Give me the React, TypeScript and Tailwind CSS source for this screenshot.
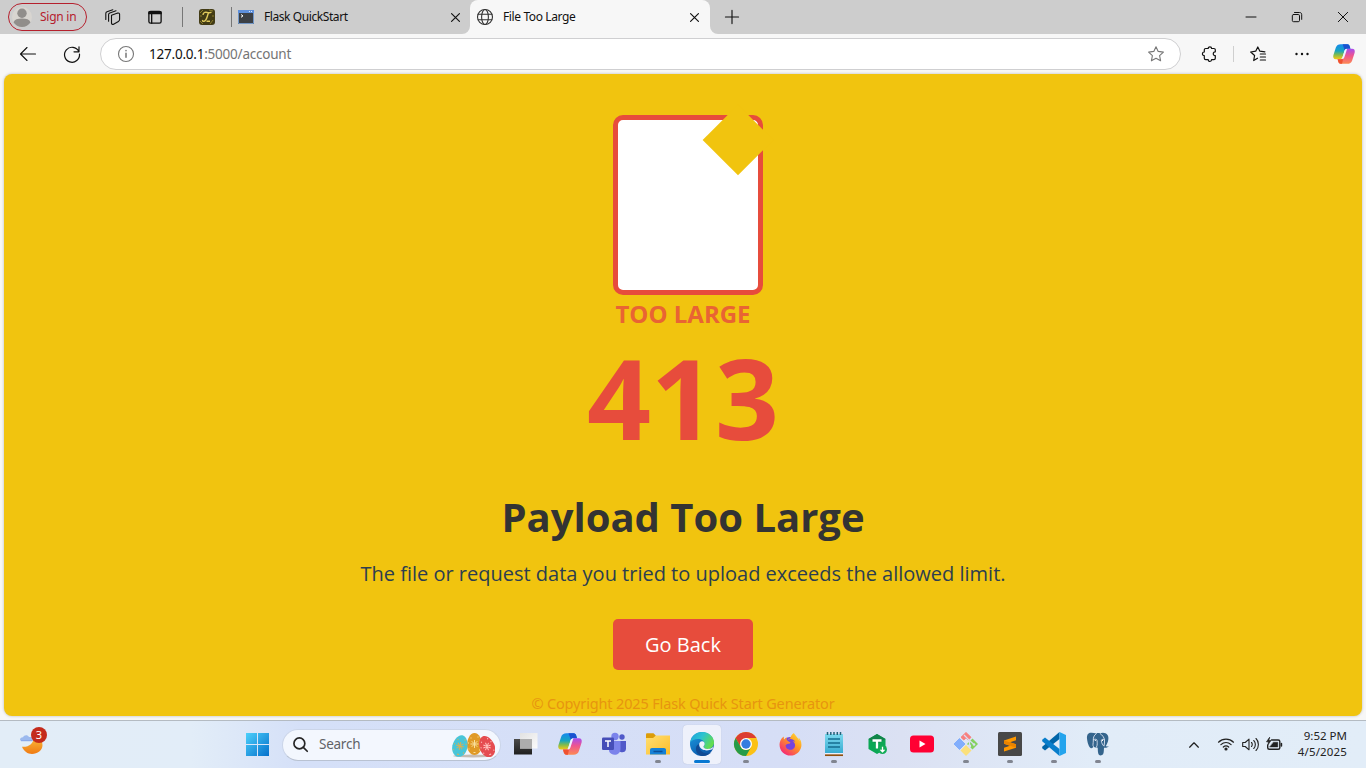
import React from 'react';
import { FaFirefoxBrowser } from 'react-icons/fa';

type IconProps = { className?: string; box?: string; children: React.ReactNode };

function Icon({ className = 'size-6', box = '0 0 24 24', children }: IconProps) {
  return (
    <svg viewBox={box} className={`block shrink-0 overflow-visible ${className}`} fill="none">
      {children}
    </svg>
  );
}

function Line({ className = 'size-4', children, color = '#111', w = 1.1 }: { className?: string; children: React.ReactNode; color?: string; w?: number }) {
  return (
    <svg viewBox="0 0 16 16" className={`block shrink-0 overflow-visible ${className}`} fill="none" stroke={color} strokeWidth={w} strokeLinecap="round" strokeLinejoin="round">
      {children}
    </svg>
  );
}

function Defs() {
  return (
    <svg className="absolute size-0">
      <defs>
        <linearGradient id="copA" x1="0" y1="0" x2="0" y2="1">
          <stop offset="0" stopColor="#1689ee" />
          <stop offset=".45" stopColor="#16a5c0" />
          <stop offset=".7" stopColor="#7dbb50" />
          <stop offset="1" stopColor="#f7c914" />
        </linearGradient>
        <linearGradient id="copB" x1="0" y1="0" x2="0" y2="1">
          <stop offset="0" stopColor="#a64df0" />
          <stop offset=".45" stopColor="#ee5590" />
          <stop offset="1" stopColor="#fd8a52" />
        </linearGradient>
        <linearGradient id="win" x1="0" y1="0" x2="1" y2="1">
          <stop offset="0" stopColor="#4cd0fb" />
          <stop offset="1" stopColor="#0570cb" />
        </linearGradient>
        <linearGradient id="moon" x1="0" y1="0" x2="0" y2="1">
          <stop offset="0" stopColor="#f9ba3a" />
          <stop offset="1" stopColor="#f07a12" />
        </linearGradient>
        <linearGradient id="edgeTop" x1="0" y1="0" x2="1" y2=".5">
          <stop offset="0" stopColor="#1da0dc" />
          <stop offset=".5" stopColor="#2cc3d0" />
          <stop offset="1" stopColor="#62dc50" />
        </linearGradient>
        <linearGradient id="edgeLow" x1="0" y1="0" x2=".6" y2="1">
          <stop offset="0" stopColor="#1b9de2" />
          <stop offset="1" stopColor="#0c56a8" />
        </linearGradient>
        <linearGradient id="fox" x1="1" y1="0" x2=".2" y2="1">
          <stop offset="0" stopColor="#ffe83d" />
          <stop offset=".45" stopColor="#ff9a22" />
          <stop offset="1" stopColor="#f5207a" />
        </linearGradient>
        <linearGradient id="folder" x1="0" y1="0" x2="1" y2="1">
          <stop offset="0" stopColor="#ffdf72" />
          <stop offset="1" stopColor="#fdbd2a" />
        </linearGradient>
        <linearGradient id="dark" x1="0" y1="0" x2="0" y2="1">
          <stop offset="0" stopColor="#4b4b4b" />
          <stop offset="1" stopColor="#1f1f1f" />
        </linearGradient>
        <linearGradient id="light" x1="0" y1="0" x2="1" y2="1">
          <stop offset="0" stopColor="#e2e2e2" />
          <stop offset="1" stopColor="#fbfbfb" />
        </linearGradient>
        <linearGradient id="note" x1="0" y1="0" x2="0" y2="1">
          <stop offset="0" stopColor="#7cd9ee" />
          <stop offset="1" stopColor="#39acd2" />
        </linearGradient>
      </defs>
    </svg>
  );
}

function Copilot({ className = 'size-6' }: { className?: string }) {
  return (
    <Icon className={className}>
      <path d="M8.5 1.3h7.2c1.4 0 2.1 1 2.5 2.2l.8 2.8h-3.5c-1.6 0-2.5.8-3 2.3l-2 6.4c-.5 1.7-1.4 2.6-3 2.6H3.2C.6 17.600-.2 15.800.4 13.300l2.700-8.300c.8-2.500 2.600-3.700 5.400-3.700Z" fill="url(#copA)" />
      <path d="M10.500 1.300h5.200c1.400 0 2.100 1 2.500 2.200l.8 2.800h-3.500c-1.300 0-2.100.5-2.700 1.500Z" fill="#1a52d0" />
      <path d="M15.500 22.700H8.300c-1.400 0-2.100-1-2.500-2.200L5 17.600h3.400c1.600 0 2.500-.8 3-2.300l2-6.400c.5-1.700 1.400-2.600 3-2.600h4.400c2.600 0 3.400 1.800 2.800 4.300L20.900 19c-.8 2.500-2.600 3.700-5.400 3.700Z" fill="url(#copB)" />
      <path d="M5 17.600h3.400c1.500 0 2.300-.6 2.900-1.900l-1.400 7H8.300c-1.400 0-2.100-1-2.500-2.200Z" fill="#ef5230" />
      <path d="M12.400 9c.5-1.800 1.300-2.700 3-2.700l-3 9.300c-.6 1.400-1.200 2-2.700 2Z" fill="#eff3ff" />
    </Icon>
  );
}

function Close({ className = 'size-[9px]' }: { className?: string }) {
  return <Line className={className} w={2.1}><path d="M1 1l14 14M15 1L1 15" /></Line>;
}

function Tabs() {
  return (
    <header className="flex h-[34px] shrink-0 items-center bg-[#cdcdcd] text-[12px] text-[#111]">
      <div className="ml-2 flex h-7 w-[79px] items-center rounded-full border border-[#b5202d] pl-[3px] text-[#b5202d]">
        <Icon className="size-5" box="0 0 20 20">
          <circle cx="10" cy="10" r="10" fill="#d8d5d0" />
          <circle cx="10" cy="6.200" r="4.700" fill="#918e8b" />
          <path d="M1.500 15.200c1-2.600 4-3.700 8.500-3.700s7.500 1.100 8.500 3.700A10 10 0 0 1 10 20a10 10 0 0 1-8.500-4.800Z" fill="#918e8b" />
        </Icon>
        <span className="ml-2 whitespace-nowrap tracking-[-0.25px]">Sign in</span>
      </div>
      <Line className="ml-[18px] size-4">
        <path d="M6.500 6.200l6.200-2.100c1-.3 1.900.2 1.900 1.200v5.300c0 .8-.4 1.400-1.200 1.800l-4.800 2.800c-1 .5-2.100 0-2.100-1V6.200Z" />
        <path d="M3.600 12.200V5.500c0-.8.4-1.300 1.200-1.600L11 1.800M.8 10.500V4.400c0-.8.400-1.300 1.200-1.600L7.800.7" />
      </Line>
      <Line className="ml-[27px] size-[14px]" w={1.500}>
        <rect x="1" y="1.500" width="14" height="13.500" rx="2" /><path d="M1 4h14M4.200 4v11" /><path d="M1.500 2.800h13" strokeWidth="2.500" />
      </Line>
      <i className="ml-[20px] h-5 w-px bg-[#777]" />
      <Icon className="ml-4 size-4" box="0 0 16 16">
        <rect width="16" height="16" rx="3" fill="#423b15" />
        <path d="M1 4l3-3M10 1l4 1M1 12l3 3M14 11l-3 4M1 7h2M13 7h2" stroke="#8c7d2a" />
        <path d="M4 6c0-3 3-3.200 5-2.400 1.500.5 2.500.1 3.500-.6M9.500 4C8 7 8 11.500 5 12.300c-1.200.3-1.700-.4-1.300-1.300M7.500 12.300H11" stroke="#dfc95c" strokeWidth="1.400" />
      </Icon>
      <i className="ml-4 h-5 w-px bg-[#777]" />
      <Icon className="ml-[6px] size-4" box="0 0 16 16">
        <rect y="1" width="16" height="14" fill="#3c4045" />
        <path d="M0 1h16v3H0Z" fill="#5e8fdb" /><path d="M.5 4v10.500h15V4" stroke="#7398c8" />
        <path d="M11 2.500h1m1 0h1" stroke="#dce9fa" /><path d="M3 5.500l2 1.400-2 1.400" stroke="#fff" />
      </Icon>
      <span className="ml-[10px] w-[187px] whitespace-nowrap tracking-[-0.42px]">Flask QuickStart</span>
      <Close />
      <div className="relative ml-[10px] flex h-[34px] w-[240px] items-center rounded-t-[8px] bg-[#f7f7f7]">
        <svg viewBox="0 0 8 8" className="absolute bottom-0 -left-2 size-2"><path d="M8 0v8H0a8 8 0 0 0 8-8" fill="#f7f7f7" /></svg>
        <svg viewBox="0 0 8 8" className="absolute -right-2 bottom-0 size-2"><path d="M0 0v8h8a8 8 0 0 1-8-8" fill="#f7f7f7" /></svg>
        <Line className="ml-[7px] size-4" color="#333">
          <circle cx="8" cy="8" r="7.500" /><ellipse cx="8" cy="8" rx="3.400" ry="7.500" /><path d="M1.200 5.300h13.600M1.200 10.700h13.600" />
        </Line>
        <span className="ml-[10px] w-[187px] whitespace-nowrap tracking-[-0.38px]">File Too Large</span>
        <Close />
      </div>
      <Line className="ml-[15px] size-[14px]" w={1.300}><path d="M8 .5v15M.5 8h15" /></Line>
      <div className="ml-auto flex items-center">
        <Line className="size-[10px]" w={1.600}><path d="M0 8h16" /></Line>
        <Line className="ml-9 size-[10px]" w={1.600}><rect x=".5" y="4" width="11.500" height="11.500" rx="2" /><path d="M4 .8h8c2.300 0 3.500 1.200 3.500 3.500v7.500" /></Line>
        <Line className="mr-[18px] ml-9 size-[10px]" w={1.600}><path d="M.5.5l15 15M15.500.5l-15 15" /></Line>
      </div>
    </header>
  );
}

function Toolbar() {
  return (
    <div className="flex h-10 shrink-0 items-center bg-[#f7f7f7]">
      <Line className="ml-5 size-4"><path d="M15.500 8H.5M7 1.500L.5 8 7 14.500" /></Line>
      <Line className="ml-7 size-4" w={1.200}><path d="M14.800 5.500A7.500 7.500 0 1 0 15.500 8M15 .8v5h-5" /></Line>
      <div className="ml-5 flex h-8 w-[1081px] items-center rounded-full border border-[#cfcfd1] bg-white pl-[17px] text-[13.5px]">
        <Line className="size-4" color="#777"><circle cx="8" cy="8" r="7.500" /><path d="M8 7.300v4M8 4.500v.2" strokeWidth="1.500" /></Line>
        <span className="ml-[15px] tracking-[-0.22px] whitespace-nowrap text-[#757575]"><span className="text-[#111]">127.0.0.1</span>:5000/account</span>
        <Line className="mr-4 ml-auto size-4" color="#777"><path d="M8 .7l2.200 4.700 5.200.7-3.800 3.500 1 5.200L8 12.300l-4.600 2.500 1-5.200L.6 6.100l5.200-.7Z" /></Line>
      </div>
      <Line className="ml-[21px] size-4" w={1.200}><path d="M3.700 2.500h2.500c0-2.300 3.400-2.300 3.400 0h2.300c.8 0 1.400.5 1.400 1.300v2c-2.700-.4-2.700 4.300 0 3.900v2.500c0 .8-.6 1.400-1.400 1.400H9.600c0 2.500-3.400 2.500-3.400 0H3.700c-.8 0-1.400-.6-1.400-1.400V9.700c-2.500 0-2.500-3.700 0-3.700V3.800c0-.8.600-1.300 1.400-1.300Z" /></Line>
      <i className="ml-[15px] h-4 w-px bg-[#cfcfcf]" />
      <Line className="ml-4 size-4" w={1.200}><path d="M7.500 12.200L3.700 14.500l.9-5L.7 6l5-.8L7.800 1l2.100 4.200 5 .6M10.300 8h5.200M10.300 11h5.200M10.300 14h5.200" /></Line>
      <Icon className="ml-7 h-4 w-4" box="0 0 16 16"><circle cx="2.500" cy="8" r="1.200" fill="#111" /><circle cx="8" cy="8" r="1.200" fill="#111" /><circle cx="13.500" cy="8" r="1.200" fill="#111" /></Icon>
      <Copilot className="ml-[23px] size-[22px]" />
    </div>
  );
}

function ErrorPage() {
  return (
    <main className="mx-1 mb-1 flex h-[642px] shrink-0 flex-col items-center overflow-hidden rounded-[8px] bg-[#f1c40f] font-['Open_Sans','Noto_Sans',sans-serif] shadow-[0_0_3px_rgba(0,0,0,0.25)]">
      <div className="relative mt-[41px] ml-[10px] h-[180px] w-[150px] shrink-0 rounded-[10px] border-[5px] border-[#e74c3c] bg-white">
        <div className="absolute -top-[5px] -right-[5px] size-[50px] rotate-45 bg-[#f1c40f]" />
      </div>
      <div className="mt-[3px] h-8 text-[24px] leading-8 font-bold whitespace-nowrap text-[#e96433]">TOO LARGE</div>
      <div className="mt-[11px] h-[112px] text-[112px] leading-[112px] font-bold text-[#e74c3c]">413</div>
      <h1 className="mt-[36px] h-[56px] text-[40px] leading-[56px] font-bold whitespace-nowrap text-[#333]">Payload Too Large</h1>
      <p className="mt-[15px] h-[28px] text-[20px] leading-[28px] whitespace-nowrap text-[#2c3e50]">The file or request data you tried to upload exceeds the allowed limit.</p>
      <button className="mt-[31px] h-[51px] w-[140px] shrink-0 rounded-[5px] bg-[#e74c3c] text-[20px] text-white">Go Back</button>
      <footer className="mt-[22px] h-[22px] font-['Noto_Sans','Open_Sans',sans-serif] text-[14.5px] leading-[22px] tracking-[-0.15px] whitespace-nowrap text-[#e7950f]">© Copyright 2025 Flask Quick Start Generator</footer>
    </main>
  );
}

function Egg({ x, y, r, fill, mark }: { x: number; y: number; r: number; fill: string; mark: string }) {
  return (
    <g transform={`translate(${x} ${y}) rotate(${r})`}>
      <path d="M0-11c4.500 0 7.500 6.500 7.500 12S4.200 11 0 11-7.500 6.500-7.500 1-4.500-11 0-11Z" fill={fill} />
      <path d="M0-4v8M-4 0H4M-2.800-2.800l5.600 5.600M2.800-2.800l-5.600 5.600" stroke={mark} strokeWidth="1" />
      <path d="M-4-6h1M3-7h1M-6 5h1M4.500 6h1M-1 8.500h2M5-3h1M-6.500-1h1" stroke={mark} strokeWidth="1.200" />
    </g>
  );
}

function TaskItem({ children, state = '' }: { children: React.ReactNode; state?: '' | 'open' | 'active' }) {
  return (
    <div className="flex h-[47px] w-11 justify-center">
      <div className={`flex h-[39px] w-[38px] flex-col items-center pt-[7px] ${state === 'active' ? 'mt-1 rounded-[4px] bg-[#eef1fb] shadow-[0_0_1px_#aab4cc]' : 'mt-1'}`}>
        {children}
        {state === 'open' && <i className="mt-1 h-[3px] w-[6px] shrink-0 rounded-full bg-[#818590]" />}
        {state === 'active' && <i className="mt-1 h-[3px] w-4 shrink-0 rounded-full bg-[#0878d2]" />}
      </div>
    </div>
  );
}

function Taskbar() {
  return (
    <footer className="flex h-12 shrink-0 items-center border-t border-[#b4bbc2] bg-[linear-gradient(90deg,#e2edf7_0%,#e2edf8_14%,#d5e0f8_22%,#d6def6_58%,#dbe1f3_66%,#e1ecf8_80%,#e2edf8_100%)]">
      <div className="relative ml-5 size-6">
        <Icon>
          <path d="M2 13.800c7 .5 12-3.500 11.500-9.300 3.500 0 9 1.500 9 7.500 0 5.500-5 9-10.500 9-4.500 0-8-2.500-10-7.200Z" fill="url(#moon)" />
          <path d="M0 7c0-1.700 1.300-2.800 3-2.700C3.900 1.800 7.800 1.500 9 4c3-.5 4.500 1 4.500 3.500H.5C.1 7.500 0 7.300 0 7Z" fill="#9bb9ee" /><path d="M1 7.700h11.500" stroke="#7f9fe6" />
        </Icon>
        <span className="absolute -top-[6px] left-[11px] flex size-4 items-center justify-center rounded-full bg-[#c42b1c] text-[11px] leading-none text-white">3</span>
      </div>
      <Icon className="ml-[202px] size-[23px]" box="0 0 23 23"><path d="M0 0h11v11H0ZM12 0h11v11H12ZM0 12h11v11H0ZM12 12h11v11H12Z" fill="url(#win)" /></Icon>
      <div className="ml-[13px] flex h-[32px] w-[219px] shrink-0 items-center rounded-full border border-[#cbd5e9] border-b-[#b9c2d2] bg-[#f3f7fe] pl-[10px]">
        <Line className="size-[15px]" color="#252525" w={1.800}><circle cx="6.800" cy="6.800" r="5.800" /><path d="M11 11l4.200 4.200" /></Line>
        <span className="ml-[11px] text-[13.5px] tracking-[-0.25px] text-[#606266]">Search</span>
        <svg viewBox="0 0 44 26" className="mr-[5px] ml-auto h-[26px] w-[44px]" fill="none">
          <ellipse cx="22" cy="24" rx="20" ry="1.500" fill="#c6bcb3" />
          <Egg x={23.500} y={12} r={0} fill="#e09a26" mark="#f9df9b" />
          <Egg x={9} y={14} r={13} fill="#48c5d8" mark="#d7b055" />
          <Egg x={36} y={14.500} r={-22} fill="#e54c50" mark="#ffc1bd" />
        </svg>
      </div>
      <nav className="ml-[3px] flex">
        <TaskItem><Icon><path d="M0 7h18v15.500H0Z" fill="url(#dark)" /><path d="M6 1h17.500v15.500H6Z" fill="url(#light)" /><path d="M6 7h12v9.500H6Z" fill="#adadad" /></Icon></TaskItem>
        <TaskItem><Copilot /></TaskItem>
        <TaskItem>
          <Icon>
            <circle cx="20" cy="5" r="2.700" fill="#5059c9" /><path d="M17 9h7v7.500c0 4-4.500 5-7 2.500Z" fill="#5059c9" />
            <circle cx="13" cy="4.500" r="3.700" fill="#7b83eb" /><path d="M8 9h10.500v8c0 7-9.500 7.500-11.500 2Z" fill="#7b83eb" />
            <rect y="5.500" width="12" height="12.500" rx="1.200" fill="#464eb8" /><path d="M3 9h6M6 9v6" stroke="#fff" strokeWidth="1.500" />
          </Icon>
        </TaskItem>
        <TaskItem state="open">
          <Icon><path d="M0 2.500C0 1.700.6 1.200 1.300 1.200h6.200l2.500 2.500V8H0Z" fill="#dc9c08" /><path d="M0 6h7l3-2.500h14v19H0Z" fill="url(#folder)" /><path d="M4 22.500v-4.500c0-1.200.8-2 2-2h12c1.200 0 2 .8 2 2v4.500Z" fill="#1681d6" /><path d="M7.500 19.500h9" stroke="#0b4f99" strokeWidth="1.500" /></Icon>
        </TaskItem>
        <TaskItem state="active">
          <Icon>
            <circle cx="12" cy="12" r="12" fill="url(#edgeLow)" />
            <path d="M.3 10.500C1 4.500 5.500 0 12 0c7 0 12 5 12 10.500 0 4-3 6.500-6.500 6.500-2.500 0-4-1-4-2.200 0-.7 1.100-1 1.100-2.800C14.600 8.500 11.200 7 8 7 4.500 7 1.500 8.500.3 10.500Z" fill="url(#edgeTop)" />
            <path d="M9.500 12c-1.500 5 2.500 9.500 8 9.500 2 0 3.500-.8 4.800-2.200C20 22.500 16.500 24 12.500 24 8 23.500 5.500 19.500 6 16c.3-2 1.500-3.500 3.500-4Z" fill="#114a93" />
            <path d="M9.300 13.500c-.6-2.600 1-4.300 2.900-4.200 1.700.1 2.800 1.500 2.400 3.200-.3 1.200-1.100 1.500-1.100 2.300 0 1.200 1.500 2.200 4 2.200 2.300 0 4.300-.7 5.800-2.500-.2 1.200-.5 2-.9 2.800-5.200 2-11.700 1.600-13.100-3.800Z" fill="#eef1fb" />
          </Icon>
        </TaskItem>
        <TaskItem state="open">
          <Icon>
            <circle cx="12" cy="12" r="12" fill="#fbc116" /><path d="M1.600 6A12 12 0 0 1 22.400 6H12l-5.200 9Z" fill="#dc3d31" />
            <path d="M1.600 6A12 12 0 0 0 12 24l5.200-9a6 6 0 0 1-10.400 0Z" fill="#269b49" /><circle cx="12" cy="12" r="6" fill="#fff" /><circle cx="12" cy="12" r="4.700" fill="#347de0" />
          </Icon>
        </TaskItem>
        <TaskItem>
          <div className="relative flex size-6 shrink-0 items-center justify-center">
            <i className="absolute top-[5px] left-[5px] size-[14px] rounded-full bg-[#7543df]" />
            <FaFirefoxBrowser size={23} className="relative" style={{ fill: 'url(#fox)' }} />
          </div>
        </TaskItem>
        <TaskItem state="open">
          <Icon><path d="M3 2h18v19H3Z" fill="url(#note)" /><path d="M3 22h18" stroke="#fff" /><path d="M3 23.200h18" stroke="#91500e" strokeWidth="1.700" /><path d="M6 7h12M6 11h12M6 15h12" stroke="#146d90" strokeWidth="1.300" /><path d="M5.500 0v3M8.800 0v3M12 0v3M15.300 0v3M18.500 0v3" stroke="#246279" strokeWidth="1.500" /></Icon>
        </TaskItem>
        <TaskItem>
          <Icon><path d="M11 2l8.500 5v10L11 22l-8.500-5V7Z" fill="#0ca755" /><path d="M2.500 7L11 2l8.500 5-8.500 5Z" fill="#12854a" /><path d="M6.500 8.500h9M11 8.500v8" stroke="#fff" strokeWidth="2.300" /><circle cx="16.500" cy="17.500" r="4.500" fill="#14ac58" /><path d="M16.500 14.800v5m-2-2l2 2 2-2" stroke="#fff" strokeWidth="1.300" /></Icon>
        </TaskItem>
        <TaskItem><Icon><rect y="3.500" width="24" height="17" rx="3.500" fill="#ff0033" /><path d="M9.500 8.500v7l6-3.500Z" fill="#fff" /></Icon></TaskItem>
        <TaskItem state="open">
          <Icon>
            <path d="M12 .5l5 4.800-2.700 2.700L12 5.800 9.800 8 7 5.300Z" fill="#f87f7d" stroke="#f87f7d" strokeLinejoin="round" />
            <path d="M5.500 6.500L11 12l-5.500 5.500L0 12Z" fill="#82aefc" stroke="#82aefc" strokeLinejoin="round" /><path d="M18.500 6.500L24 12l-5.500 5.500L13 12Z" fill="#84d15f" />
            <path d="M12 13l5.500 5.500L12 24l-5.500-5.500Z" fill="#fbe07c" /><path d="M10 3l5.500 5.500V14M15.500 8.500l4 3.500" stroke="#d9dff4" strokeWidth="1.200" /><circle cx="15.500" cy="14" r="1.700" fill="#d9dff4" /><circle cx="20" cy="12.500" r="1.300" fill="#d9dff4" />
          </Icon>
        </TaskItem>
        <TaskItem state="open">
          <Icon><rect width="24" height="24" rx="1.500" fill="#484848" /><path d="M6 8.500L18 4.500v3.800l-6 2 6 2v3.500L6 19.500v-3.700l6-2-6-2Z" fill="#ff9800" /><path d="M6 8.500l12 3.800v3.500L6 11.800Z" fill="#e98300" /></Icon>
        </TaskItem>
        <TaskItem state="open">
          <Icon><path d="M17.500 0v7L3 18.500.2 16.300v-1.500Z" fill="#0065a9" /><path d="M17.500 24v-7L3 5.500.2 7.700v1.500Z" fill="#087dcb" /><path d="M17.500 0L24 3v18l-6.500 3Z" fill="#24a4ed" /></Icon>
        </TaskItem>
        <TaskItem state="open">
          <Icon>
            <path d="M5.500.8C2 .5.800 3 1 6.500c.3 4 2 9 4 9.700 1 .3 1.800-.5 2.600-1.400.7.800 2.400.8 3.400.7.600 0 .8.500.8 1.500.1 3 .2 6.400 2.700 6.400 2.600 0 3.200-1.800 3.300-4.400l.2-3.300c2 .4 3.900-.2 4.600-1.400-.9.200-2 .1-2.700-.4 2.300-3.500 3.300-8.400 1.800-10.700C19.900.300 16.300.400 13.900 1.300c-1.200-.3-2.500-.3-3.600.1C8.800 1 7 .8 5.500.8Z" fill="#34648c" />
            <path d="M10.500 1.500C7.500 3.500 7.200 6 7.300 9c.1 2.500-1 4 .3 5.800M7.200 7.800c2-1 3.900-.8 3.900 1 0 2 .6 3.700-.7 6.500M14 1.500c2.300 1.500 4 3.800 4.500 6.300-2-.8-3.400-.4-3.200 1 .2 2.300 1.500 4.200 2.700 5.500M18.500 7.800c.3 2.500-.2 4-.5 6.200" stroke="#d9e2f1" strokeWidth=".9" />
            <path d="M8.800 8.500h1M16 8.500h1" stroke="#fff" />
          </Icon>
        </TaskItem>
      </nav>
      <div className="ml-auto flex items-center">
        <Line className="size-[10px]" w={2} color="#222"><path d="M1 11.500l7-7 7 7" /></Line>
        <Line className="ml-[19px] size-4" color="#222" w={1.200}><path d="M.5 5.200c4.200-4 10.800-4 15 0M2.900 7.600c3-2.700 7.200-2.700 10.200 0M5.300 10c1.600-1.400 3.800-1.400 5.400 0" /><circle cx="8" cy="12" r="1" fill="#222" /></Line>
        <Line className="ml-2 size-4" color="#222"><path d="M.7 5.500h2.500L7 2.200v10.600L3.200 9.500H.7ZM9.500 5.500c1 1 1 3 0 4M11.700 3.500c2.200 2 2.200 6 0 8M14 1.500c3.200 3 3.200 9 0 12" /></Line>
        <Line className="ml-2 size-4" color="#222" w={1.400}><path d="M5.500 3h6.700c1 0 1.600.6 1.600 1.500v6.200c0 .9-.6 1.500-1.600 1.500H3.300c-1 0-1.600-.6-1.600-1.500V8M15.500 6.500v2.500" /><path d="M7.500 5.200h4.300V10H3.800Z" fill="#222" strokeWidth=".4" /><path d="M3.500.5L.5 4.800h2l-.5 3 3-4.300H3Z" fill="#222" strokeWidth=".7" /></Line>
        <div className="mr-[19px] ml-4 w-[49px] text-right text-[11.5px] leading-4 whitespace-nowrap text-[#222]"><div className="-mt-px">9:52 PM</div><div className="-ml-2 tracking-[0.15px]">4/5/2025</div></div>
      </div>
    </footer>
  );
}

export default function App() {
  return (
    <div className="flex h-[768px] w-[1366px] flex-col overflow-hidden bg-[#f7f7f7] font-['Noto_Sans','Open_Sans',sans-serif]">
      <Defs />
      <Tabs />
      <Toolbar />
      <ErrorPage />
      <Taskbar />
    </div>
  );
}
